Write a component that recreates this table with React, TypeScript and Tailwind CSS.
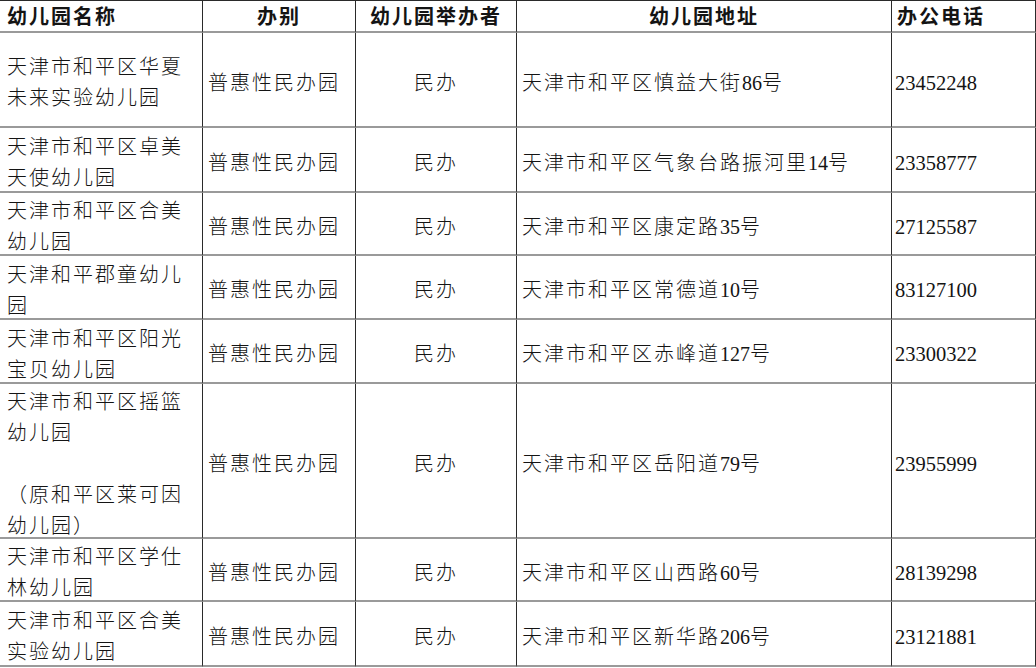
import React from "react";

type Row = {
  name: string[];
  type: string;
  owner: string;
  address: string;
  phone: string;
  h: string;
};

const rows: Row[] = [
  { name: ["天津市和平区华夏", "未来实验幼儿园"], type: "普惠性民办园", owner: "民办", address: "天津市和平区慎益大街86号", phone: "23452248", h: "h-[95px]" },
  { name: ["天津市和平区卓美", "天使幼儿园"], type: "普惠性民办园", owner: "民办", address: "天津市和平区气象台路振河里14号", phone: "23358777", h: "h-[65px]" },
  { name: ["天津市和平区合美", "幼儿园"], type: "普惠性民办园", owner: "民办", address: "天津市和平区康定路35号", phone: "27125587", h: "h-[63px]" },
  { name: ["天津和平郡童幼儿", "园"], type: "普惠性民办园", owner: "民办", address: "天津市和平区常德道10号", phone: "83127100", h: "h-[64px]" },
  { name: ["天津市和平区阳光", "宝贝幼儿园"], type: "普惠性民办园", owner: "民办", address: "天津市和平区赤峰道127号", phone: "23300322", h: "h-[64px]" },
  { name: ["天津市和平区摇篮", "幼儿园", "\u00a0", "（原和平区莱可因", "幼儿园）"], type: "普惠性民办园", owner: "民办", address: "天津市和平区岳阳道79号", phone: "23955999", h: "h-[155px]" },
  { name: ["天津市和平区学仕", "林幼儿园"], type: "普惠性民办园", owner: "民办", address: "天津市和平区山西路60号", phone: "28139298", h: "h-[63px]" },
  { name: ["天津市和平区合美", "实验幼儿园"], type: "普惠性民办园", owner: "民办", address: "天津市和平区新华路206号", phone: "23121881", h: "h-[65px]" },
];

const cell = "flex items-center border-r border-r-[#2a2a2a] border-b-2 border-b-[#9a9a9a]";

// digits inside the address are set without the extra spacing of the CJK text
function Address({ text }: { text: string }) {
  const parts = text.split(/(\d+)/);
  return (
    <span>
      {parts.map((p, i) =>
        /^\d+$/.test(p) ? (
          <span key={i} className="tracking-normal">{p}</span>
        ) : (
          <span key={i}>{p}</span>
        )
      )}
    </span>
  );
}

export default function App() {
  return (
    <div
      className="w-[1036px] h-[668px] bg-white text-[#141414] text-[20px] leading-[31px] overflow-hidden"
      style={{ fontFamily: "'Liberation Serif', 'Noto Sans CJK SC', serif" }}
    >
      <div className="grid grid-cols-[203px_153px_161px_375px_144px] border-t border-t-[#2a2a2a]">
        {/* header */}
        <div className={`${cell} h-[32px] pl-[7px] pt-[2px] font-bold tracking-[2px]`}>幼儿园名称</div>
        <div className={`${cell} h-[32px] pt-[2px] justify-center font-bold tracking-[2px]`}>办别</div>
        <div className={`${cell} h-[32px] pt-[2px] justify-center font-bold tracking-[2px]`}>幼儿园举办者</div>
        <div className={`${cell} h-[32px] pt-[2px] justify-center font-bold tracking-[2px]`}>幼儿园地址</div>
        <div className={`${cell} h-[32px] pt-[2px] pl-[5px] font-bold tracking-[2px]`}>办公电话</div>

        {rows.map((r, i) => (
          <React.Fragment key={i}>
            <div className={`${cell} ${r.h} pt-[7px] pl-[7px] tracking-[2px] font-light`}>
              <div className="flex flex-col">
                {r.name.map((l, j) => (
                  <span key={j} className="whitespace-nowrap">{l}</span>
                ))}
              </div>
            </div>
            <div className={`${cell} ${r.h} pt-[7px] pl-[5px] tracking-[2px] font-light`}>{r.type}</div>
            <div className={`${cell} ${r.h} pt-[7px] justify-center tracking-[2px] font-light`}>{r.owner}</div>
            <div className={`${cell} ${r.h} pt-[7px] pl-[5px] tracking-[2px] font-light whitespace-nowrap`}>
              <Address text={r.address} />
            </div>
            <div className={`${cell} ${r.h} pt-[7px] pl-[3px] text-[20.5px]`}>{r.phone}</div>
          </React.Fragment>
        ))}
      </div>
    </div>
  );
}
